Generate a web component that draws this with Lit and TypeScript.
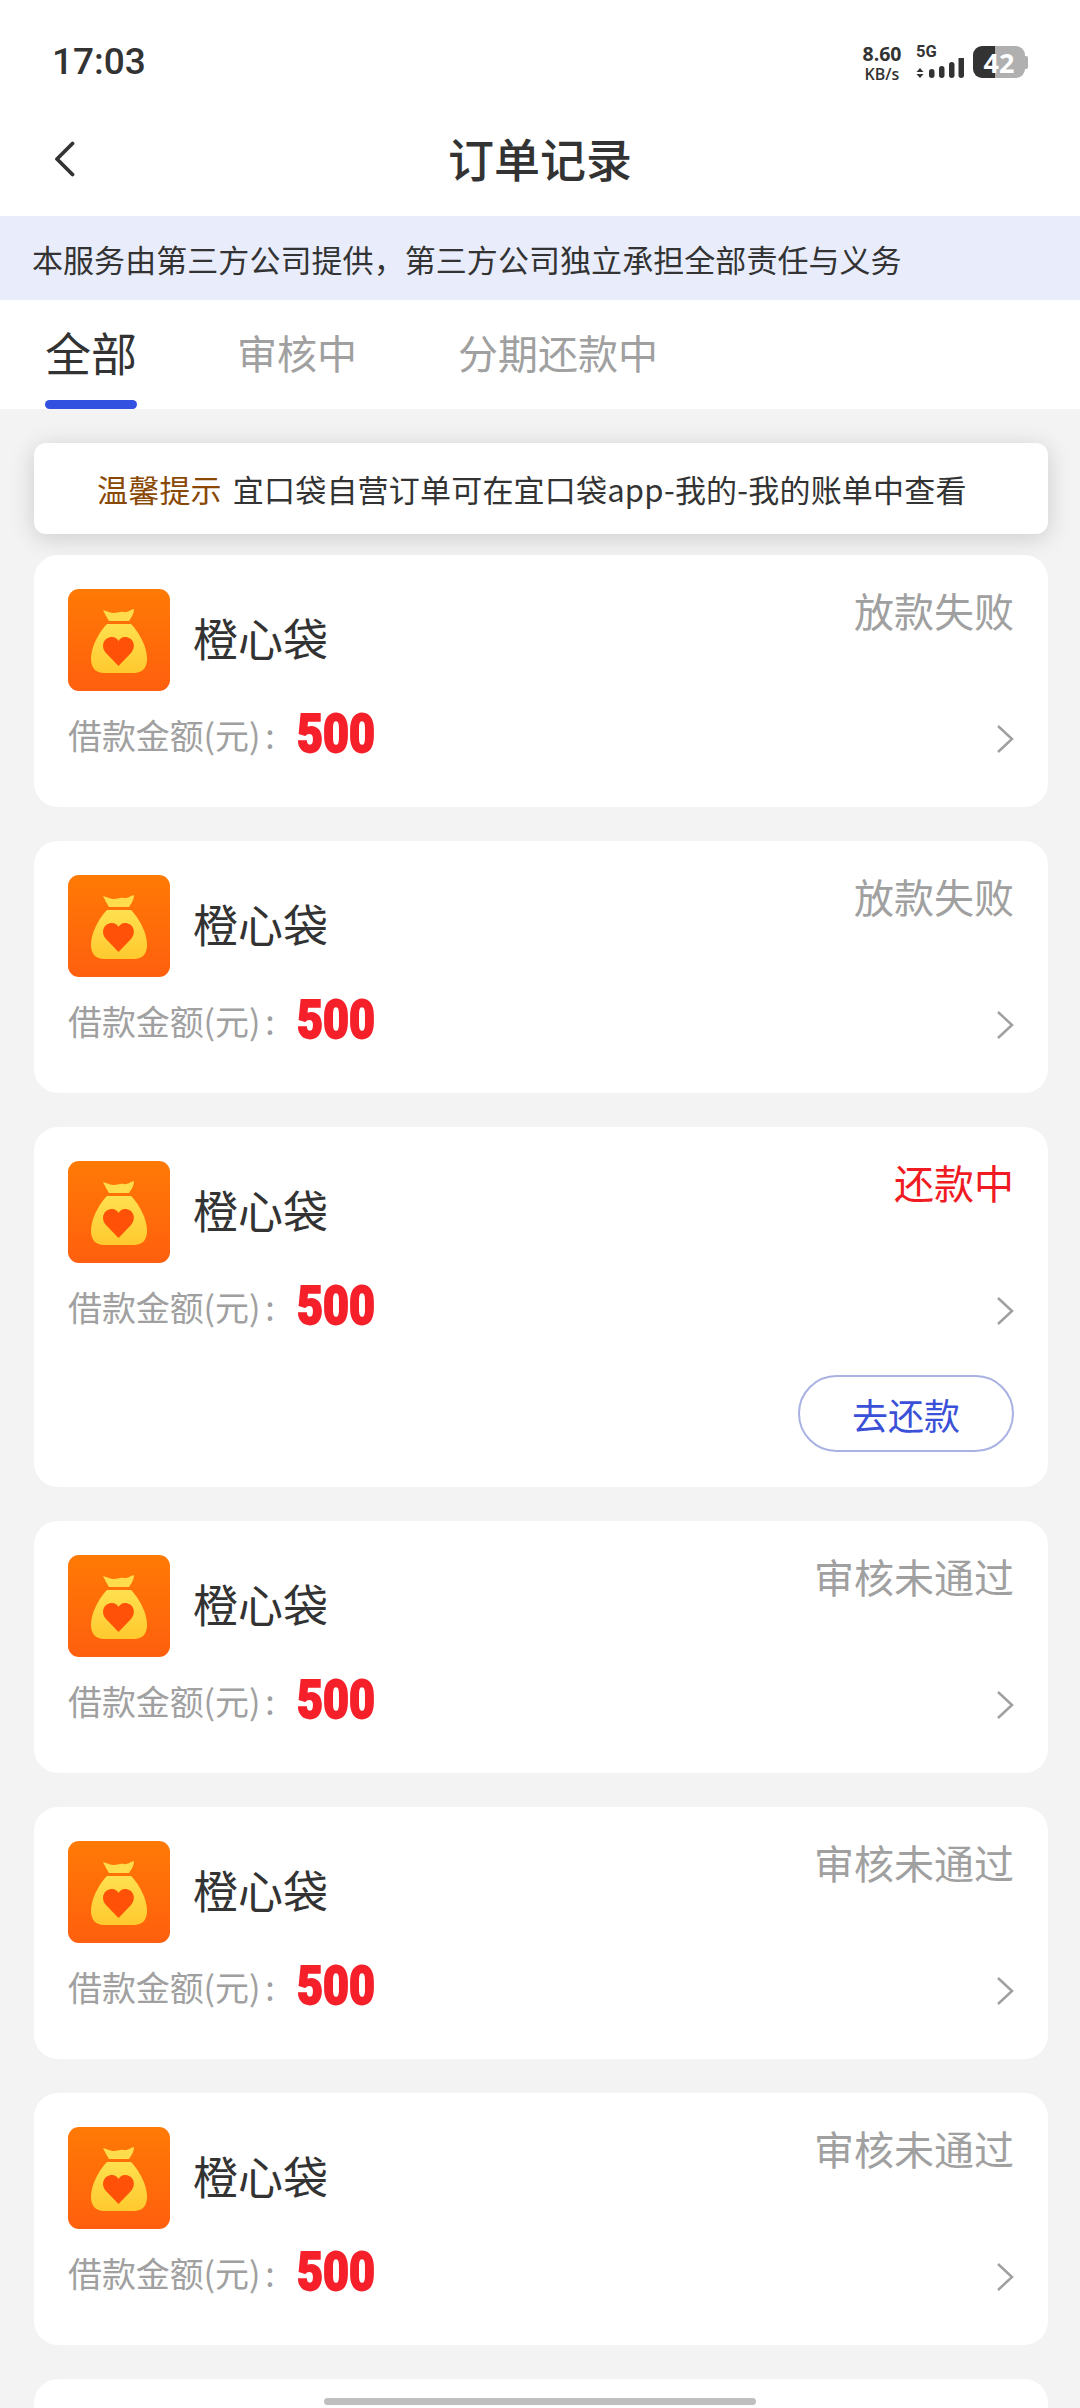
import { LitElement, html, css } from "lit";
import { customElement } from "lit/decorators.js";

type Order = { status: string; kind: "fail" | "repay" | "reject" };
const orders: Order[] = [
  { status: "放款失败", kind: "fail" },
  { status: "放款失败", kind: "fail" },
  { status: "还款中", kind: "repay" },
  { status: "审核未通过", kind: "reject" },
  { status: "审核未通过", kind: "reject" },
  { status: "审核未通过", kind: "reject" },
];

const appIcon = (id: number) => html`<svg class="app-icon" viewBox="0 0 102 102">
  <defs>
    <linearGradient id="bg${id}" x1="0" y1="0" x2="0" y2="1"><stop offset="0" stop-color="#ff7a05"/><stop offset="1" stop-color="#ff5f0e"/></linearGradient>
    <linearGradient id="bag${id}" x1="0" y1="0" x2="0" y2="1"><stop offset="0" stop-color="#ffe04f"/><stop offset="1" stop-color="#ffc92e"/></linearGradient>
  </defs>
  <rect width="102" height="102" rx="11" fill="url(#bg${id})"/>
  <path d="M35 21C39 22 43 24 46 24C49 24 52 22 56 23C59 24 62 21 66 20C66 25 63 29 61 32H41C39 29 37 25 35 21Z" fill="#ffdc4c"/>
  <path d="M39 35H63C68 40 79 55 79 70C79 79 74 84 66 84H36C28 84 23 79 23 70C23 55 34 40 39 35Z" fill="url(#bag${id})"/>
  <path d="M50.500 77L38 64C32 57 36 48 44 48C47 48 49.500 50 50.500 52C51.500 50 54 48 57 48C65 48 69 57 63 64Z" fill="#ff5208"/>
</svg>`;

@customElement("app-root")
export class AppRoot extends LitElement {
  static styles = css`
    :host {
      display: block;
      position: relative;
      width: 1080px;
      height: 2408px;
      overflow: hidden;
      background: #f3f3f3;
      font-family: "Noto Sans CJK SC", "Noto Sans", sans-serif;
      color: #333;
    }
    .top { background: #fff; }
    .status-bar {
      height: 122px;
      display: flex;
      align-items: flex-start;
      justify-content: space-between;
      padding: 46px 52px 0 52px;
      box-sizing: border-box;
    }
    .time { font: 500 37px/1 Roboto, sans-serif; color: #333; margin-top: -3px; }
    .sys { display: flex; align-items: flex-start; }
    .speed { width: 44px; margin-right: 12px; text-align: center; font-family: "Open Sans", sans-serif; font-weight: 700; color: #333; }
    .speed-top { font-size: 19.500px; line-height: 16px; }
    .speed-unit { font-size: 16px; line-height: 16px; margin-top: 4px; font-weight: 600; }
    .net { width: 48px; margin-right: 9px; }
    .g5 { font: 700 16.500px/12px Roboto, sans-serif; color: #333; height: 12px; white-space: nowrap; }
    .signal { display: block; width: 48px; height: 22px; }
    .battery {
      width: 52px;
      height: 32px;
      border-radius: 9px;
      background: linear-gradient(90deg, #333 0 22px, #b0b0b0 22px);
      display: flex;
      align-items: center;
      justify-content: center;
      color: #fff;
      font: 700 27px/1 "Open Sans", sans-serif;
    }
    .nub { width: 3px; height: 13px; margin-top: 10px; background: #b0b0b0; border-radius: 0 2px 2px 0; }
    .nav {
      height: 94px;
      position: relative;
      display: flex;
      align-items: flex-start;
      justify-content: center;
      padding-top: 12px;
      box-sizing: border-box;
    }
    .back { position: absolute; left: 54px; top: 19px; width: 21px; height: 36px; }
    .title { font-size: 46px; font-weight: 500; line-height: 46px; color: #333; }
    .banner {
      height: 84px;
      background: #e9edfb;
      display: flex;
      align-items: center;
      padding-left: 32px;
      font-size: 31px;
      letter-spacing: 0.06px;
      color: #333;
    }
    .tabs { height: 109px; display: flex; align-items: flex-start; padding-left: 45px; }
    .tab { position: relative; height: 109px; display: flex; align-items: center; color: #a0a0a0; font-size: 40px; line-height: 1; padding: 32px 0 38px; box-sizing: border-box; }
    .tab.on { font-size: 46px; color: #333; padding-top: 30px; margin-right: 100px; }
    .tab.two { margin-right: 101px; }
    .tab.on::after { content: ""; position: absolute; left: 0; right: 0; bottom: 0; height: 9px; border-radius: 5px; background: #3251e0; }
    .list { display: flex; flex-direction: column; padding: 34px 32px 0 34px; }
    .notice {
      height: 91px;
      background: #fff;
      border-radius: 12px;
      box-shadow: 0 4px 24px rgba(0, 0, 0, 0.16);
      display: flex;
      align-items: center;
      padding-left: 63px;
      font-size: 31px;
      letter-spacing: 0.2px;
      white-space: nowrap;
      margin-bottom: 21px;
    }
    .notice b { font-weight: 400; color: #8a4806; margin-right: 11px; }
    .cards { display: flex; flex-direction: column; gap: 34px; }
    .card { background: #fff; border-radius: 24px; padding: 34px 34px 46px; flex: none; }
    .card.has-btn { padding-bottom: 35px; }
    .card.stub { height: 252px; box-sizing: border-box; }
    .head { display: flex; justify-content: space-between; align-items: flex-start; height: 102px; }
    .brand { display: flex; align-items: center; gap: 23px; font-size: 45px; line-height: 1; color: #333; }
    .name { margin-bottom: 5px; }
    .app-icon { width: 102px; height: 102px; display: block; flex: none; }
    .state { font-size: 40px; line-height: 44px; margin-top: -1px; color: #a0a0a0; }
    .state.repay { color: #ef1a22; }
    .amount { display: flex; align-items: center; height: 52px; margin-top: 18px; }
    .label { font-size: 34px; color: #a0a0a0; line-height: 1; white-space: nowrap; letter-spacing: -0.1px; }
    .colon { margin-left: 5px; }
    .num {
      font: 900 54px/1 Roboto, sans-serif;
      color: #f5202a;
      -webkit-text-stroke: 1.800px #f5202a;
      display: inline-block;
      width: 79px;
      margin-left: 22px;
      transform: scaleX(0.83);
      transform-origin: left center;
      position: relative;
      top: -1px;
    }
    .chev { width: 18px; height: 30px; margin-left: auto; flex: none; position: relative; top: 4px; }
    .actions { display: flex; justify-content: flex-end; margin-top: 42px; }
    .pay {
      width: 216px;
      height: 77px;
      box-sizing: border-box;
      border: 2px solid #a9b2e2;
      border-radius: 39px;
      display: flex;
      align-items: center;
      justify-content: center;
      color: #3a50d8;
      font-size: 36px;
    }
    .home { position: absolute; left: 324px; top: 2398px; width: 432px; height: 7px; border-radius: 4px; background: #bfbfbf; }
  `;

  render() {
    return html`
      <div class="top">
        <div class="status-bar">
          <div class="time">17:03</div>
          <div class="sys">
            <div class="speed"><div class="speed-top">8.60</div><div class="speed-unit">KB/s</div></div>
            <div class="net">
              <div class="g5">5G</div>
              <svg class="signal" viewBox="0 12 48 22">
                <path d="M4 22l3.500 4h-7zM4 32l3.500-4h-7z" fill="#333"/>
                <rect x="13" y="23" width="5.500" height="9" rx="2.700" fill="#333"/>
                <rect x="23" y="20" width="5.500" height="12" rx="2.700" fill="#333"/>
                <rect x="33" y="16" width="5.500" height="16" rx="2.700" fill="#333"/>
                <rect x="42.500" y="10" width="5.500" height="22" rx="2.700" fill="#333"/>
              </svg>
            </div>
            <div class="battery">42</div>
            <div class="nub"></div>
          </div>
        </div>
        <div class="nav">
          <svg class="back" viewBox="0 0 21 36"><path d="M18.500 2.500L3 18l15.500 15.500" fill="none" stroke="#333" stroke-width="3.800" stroke-linecap="round" stroke-linejoin="round"/></svg>
          <div class="title">订单记录</div>
        </div>
        <div class="banner">本服务由第三方公司提供，第三方公司独立承担全部责任与义务</div>
        <div class="tabs">
          <div class="tab on">全部</div>
          <div class="tab two">审核中</div>
          <div class="tab">分期还款中</div>
        </div>
      </div>
      <div class="list">
        <div class="notice"><b>温馨提示</b>宜口袋自营订单可在宜口袋app-我的-我的账单中查看</div>
        <div class="cards">
          ${orders.map(
            (o, i) => html`
              <div class="card ${o.kind === "repay" ? "has-btn" : ""}">
                <div class="head">
                  <div class="brand">${appIcon(i)}<span class="name">橙心袋</span></div>
                  <div class="state ${o.kind}">${o.status}</div>
                </div>
                <div class="amount">
                  <span class="label">借款金额(元)<span class="colon">:</span></span>
                  <span class="num">500</span>
                  <svg class="chev" viewBox="0 0 18 30"><path d="M2 2l14 13L2 28" fill="none" stroke="#a0a0a0" stroke-width="2.500"/></svg>
                </div>
                ${o.kind === "repay" ? html`<div class="actions"><div class="pay">去还款</div></div>` : ""}
              </div>
            `
          )}
          <div class="card stub"></div>
        </div>
      </div>
      <div class="home"></div>
    `;
  }
}
